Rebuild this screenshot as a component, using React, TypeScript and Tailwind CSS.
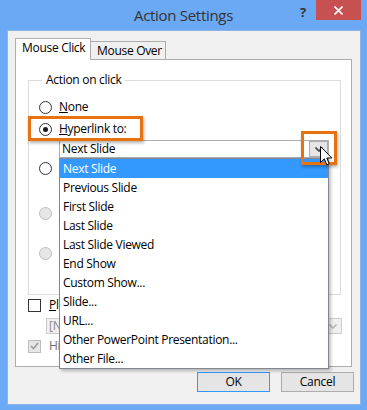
import React from "react";

const listItems = [
  "Next Slide",
  "Previous Slide",
  "First Slide",
  "Last Slide",
  "Last Slide Viewed",
  "End Show",
  "Custom Show...",
  "Slide...",
  "URL...",
  "Other PowerPoint Presentation...",
  "Other File...",
];

const Radio: React.FC<{ checked?: boolean; disabled?: boolean }> = ({
  checked,
  disabled,
}) => (
  <span
    className={
      disabled
        ? "w-[13px] h-[13px] rounded-full border border-[#bcbcbc] bg-[#e6e6e6] shrink-0"
        : "w-[13px] h-[13px] rounded-full border border-[#333333] bg-white shrink-0 flex items-center justify-center"
    }
  >
    {checked && <span className="w-[5px] h-[5px] rounded-full bg-[#1a1a1a]" />}
  </span>
);

const Checkbox: React.FC<{ checked?: boolean; disabled?: boolean }> = ({
  checked,
  disabled,
}) => (
  <span
    className={
      disabled
        ? "w-[13px] h-[13px] border border-[#bcbcbc] bg-[#e6e6e6] shrink-0 flex items-center justify-center"
        : "w-[13px] h-[13px] border border-[#333333] bg-white shrink-0"
    }
  >
    {checked && (
      <svg width="9" height="8" viewBox="0 0 9 8">
        <path d="M1 4 L3.5 6.5 L8 1" stroke="#9a9a9a" strokeWidth="1.6" fill="none" />
      </svg>
    )}
  </span>
);

const Chevron: React.FC<{ color: string }> = ({ color }) => (
  <svg width="8" height="5" viewBox="0 0 8 5">
    <path d="M0.5 0.5 L4 4 L7.5 0.5" stroke={color} strokeWidth="1.6" fill="none" />
  </svg>
);

const App: React.FC = () => {
  return (
    <div className="relative w-[367px] h-[410px] bg-[#6ba9f4] flex flex-col font-['Open_Sans',sans-serif] text-[12px] leading-[16px] tracking-[-0.3px] text-black overflow-hidden">
      {/* title bar */}
      <div className="h-[30px] shrink-0 grid grid-cols-[1fr_auto_1fr]">
        <div />
        <div className="flex items-center text-[15px] text-[#333333] pb-[1px]">
          Action Settings
        </div>
        <div className="flex justify-end items-start">
          <span className="mt-[4px] mr-[10px] text-[13px] font-bold text-[#333333]">?</span>
          <button className="w-[45px] h-[20px] mr-[6px] bg-[#c75050] flex items-center justify-center">
            <svg width="9" height="9" viewBox="0 0 9 9">
              <path d="M0.5 0.5 L8.5 8.5 M8.5 0.5 L0.5 8.5" stroke="white" strokeWidth="1.6" />
            </svg>
          </button>
        </div>
      </div>

      {/* client area */}
      <div className="ml-[7px] w-[354px] h-[375px] bg-[#f0f0f0] border border-[#8db2e3] px-[7px] pt-[7px]">
        {/* tabs */}
        <div className="h-[21px] flex items-end">
          <div className="relative z-10 h-[22px] -mb-px w-[76px] bg-white border border-b-0 border-[#adadad] pl-[6px] pt-[1px]">
            Mouse Click
          </div>
          <div className="h-[18px] w-[75px] bg-[#f0f0f0] border border-l-0 border-b-0 border-[#adadad] pl-[6px] leading-[17px]">
            Mouse Over
          </div>
        </div>

        {/* tab panel */}
        <div className="w-[337px] h-[308px] bg-white border border-[#adadad] px-[12px]">
          <fieldset className="mt-[12px] w-[313px] h-[223px] border border-[#dcdcdc] px-[10px]">
            <legend className="ml-[3px] px-[4px] leading-[16px]">Action on click</legend>

            <div className="mt-[11px] h-[16px] flex items-center gap-[7px]">
              <Radio />
              <span>
                <u>N</u>one
              </span>
            </div>
            <div className="mt-[6px] h-[16px] flex items-center gap-[7px]">
              <Radio checked />
              <span>
                <u>H</u>yperlink to:
              </span>
            </div>

            {/* hyperlink combobox with open list */}
            <div className="relative mt-[3px] ml-[20px] w-[270px] h-[18px]">
              <div className="h-[18px] flex items-center bg-white border border-[#abadb3]">
                <span className="flex-1 pl-[2px]">Next Slide</span>
                <span className="w-[19px] h-[16px] bg-[#e5e5e5] border border-[#acacac] flex items-center justify-center">
                  <Chevron color="#444444" />
                </span>
              </div>
              <ul className="absolute left-0 top-[18px] w-[270px] h-[211px] z-20 bg-white border border-[#828790] shadow-[2px_2px_3px_rgba(0,0,0,0.25)]">
                {listItems.map((item, i) => (
                  <li
                    key={item}
                    className={
                      i === 0
                        ? "h-[19px] flex items-center pl-[3px] bg-[#3399ff] text-white"
                        : "h-[19px] flex items-center pl-[3px]"
                    }
                  >
                    {item}
                  </li>
                ))}
              </ul>
            </div>

            <div className="mt-[2px] h-[16px] flex items-center gap-[7px]">
              <Radio />
            </div>
            <div className="mt-[4px] ml-[20px] w-[200px] h-[18px] border border-[#abadb3] bg-white" />
            <div className="mt-[7px] h-[16px] flex items-center gap-[7px]">
              <Radio disabled />
            </div>
            <div className="mt-[4px] ml-[20px] w-[200px] h-[18px] border border-[#cccccc] bg-[#f0f0f0]" />
            <div className="mt-[2px] h-[16px] flex items-center gap-[7px]">
              <Radio disabled />
            </div>
            <div className="mt-[4px] ml-[20px] w-[200px] h-[18px] border border-[#cccccc] bg-[#f0f0f0]" />
          </fieldset>

          <div className="mt-[2px] h-[16px] flex items-center gap-[8px]">
            <Checkbox />
            <span>
              <u>P</u>lay sound:
            </span>
          </div>
          <div className="mt-[5px] ml-[18px] w-[296px] h-[16px] flex items-center bg-[#f0f0f0] border border-[#cccccc] text-[#8a8a8a]">
            <span className="flex-1 pl-[2px]">[No Sound]</span>
            <span className="w-[17px] flex justify-center">
              <Chevron color="#b8b8b8" />
            </span>
          </div>
          <div className="mt-[4px] h-[16px] flex items-center gap-[8px] text-[#6d6d6d]">
            <Checkbox checked disabled />
            <span>
              Highlight <u>c</u>lick
            </span>
          </div>
        </div>

        {/* buttons */}
        <div className="mt-[5px] flex justify-end gap-[11px] -mr-px">
          <button className="w-[73px] h-[20px] bg-[#e5e5e5] border border-[#3399ff]">OK</button>
          <button className="w-[73px] h-[20px] bg-[#e5e5e5] border border-[#adadad]">Cancel</button>
        </div>
      </div>

      {/* tutorial highlights */}
      <div className="absolute left-[28px] top-[116px] w-[115px] h-[25px] border-[3px] border-[#e8720f] shadow-[1px_2px_3px_rgba(0,0,0,0.3)] z-30" />
      <div className="absolute left-[301px] top-[131px] w-[36px] h-[34px] border-[3px] border-[#e8720f] shadow-[1px_2px_3px_rgba(0,0,0,0.3)] z-30" />

      {/* mouse cursor */}
      <svg className="absolute left-[320px] top-[146px] z-40" width="13" height="21" viewBox="0 0 13 21">
        <path
          d="M0.5 0.5 L0.5 16.5 L4.3 12.8 L6.8 18.8 L9.2 17.8 L6.8 12 L11.8 12 Z"
          fill="white"
          stroke="black"
          strokeWidth="1"
          strokeLinejoin="round"
        />
      </svg>
    </div>
  );
};

export default App;
